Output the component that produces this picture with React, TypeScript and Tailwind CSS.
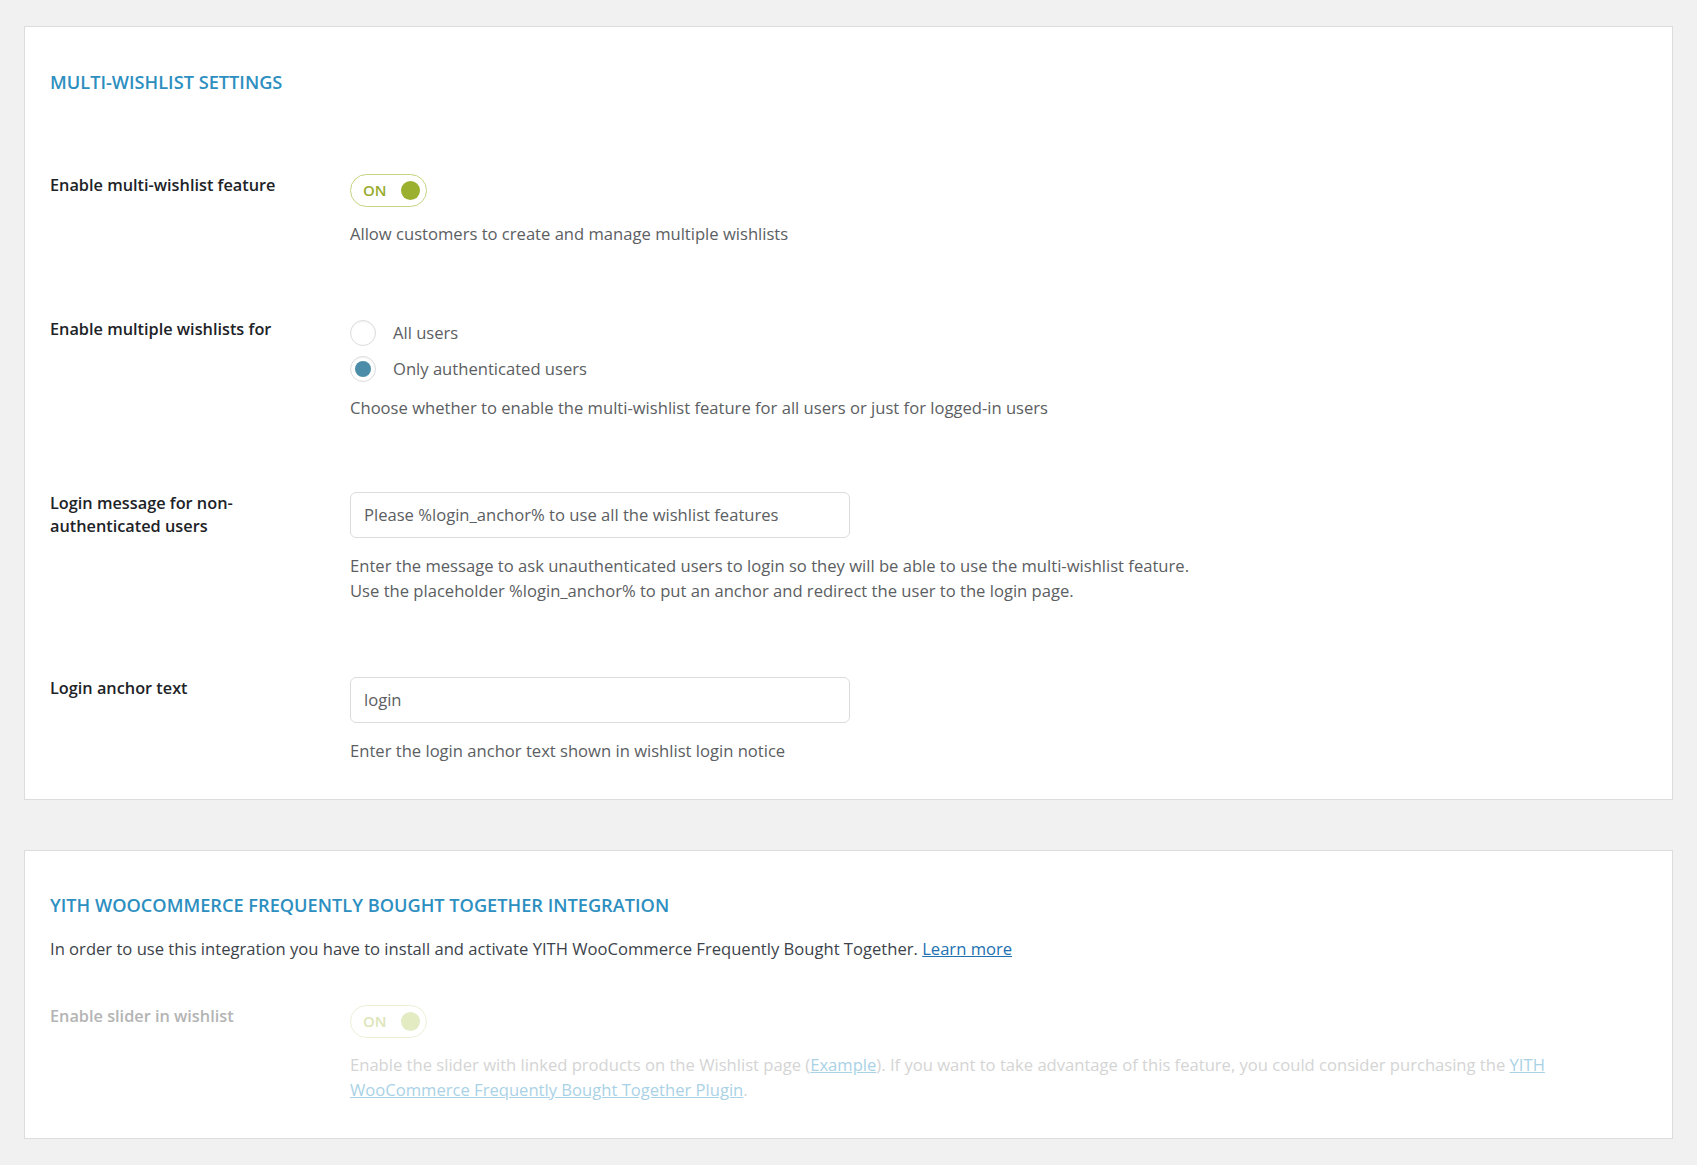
import React from 'react';

const font = { fontFamily: '"Open Sans", "Noto Sans", Arial, sans-serif' };

const Toggle: React.FC<{ disabled?: boolean }> = ({ disabled }) => (
  <div
    className={`flex h-[33px] w-[77px] items-center justify-between rounded-full border-[1.5px] bg-white pl-[12px] pr-[6px] ${
      disabled ? 'border-[#ecf1d6]' : 'border-[#c5d47f]'
    }`}
  >
    <span className={`text-[15px] font-semibold ${disabled ? 'text-[#dde5b8]' : 'text-[#98ab2c]'}`}>ON</span>
    <span className={`h-[19px] w-[19px] rounded-full ${disabled ? 'bg-[#e3ebc3]' : 'bg-[#9bb02e]'}`}></span>
  </div>
);

const Radio: React.FC<{ checked?: boolean; label: string }> = ({ checked, label }) => (
  <label className="flex items-center gap-[17px]">
    <span className="flex h-[26px] w-[26px] items-center justify-center rounded-full border border-[#dcdcdc] bg-white shadow-[inset_0_1px_2px_rgba(0,0,0,0.05)]">
      {checked && <span className="h-[16px] w-[16px] rounded-full bg-[#4b8da8]"></span>}
    </span>
    <span className="text-[16.6px] text-[#5b5e62]">{label}</span>
  </label>
);

const Row: React.FC<{ label: React.ReactNode; children: React.ReactNode; muted?: boolean }> = ({ label, children, muted }) => (
  <div className="grid grid-cols-[300px_1fr]">
    <div className={`pr-4 text-[16.3px] font-semibold leading-[23px] ${muted ? 'text-[#b4b4b4]' : 'text-[#1d2327]'}`}>{label}</div>
    <div className="flex flex-col">{children}</div>
  </div>
);

const Desc: React.FC<{ children: React.ReactNode; className?: string }> = ({ children, className }) => (
  <p className={`text-[16.6px] leading-[25px] text-[#5b5e62] ${className ?? ''}`}>{children}</p>
);

const TextInput: React.FC<{ value: string }> = ({ value }) => (
  <div className="flex h-[46px] w-[500px] items-center rounded-[6px] border border-[#dcdcdc] bg-white px-[13px] text-[16.6px] text-[#5b5e62]">
    {value}
  </div>
);

export default function App() {
  return (
    <div className="min-h-[1165px] bg-[#f1f1f1] px-[24px] pt-[26px] pb-[28px]" style={font}>
      {/* Multi-wishlist */}
      <section className="border border-[#dcdcdc] bg-white px-[25px] pt-[42px] pb-[36px]">
        <h2 className="text-[18.2px] font-semibold uppercase leading-[26px] text-[#2d8fbf]">Multi-wishlist settings</h2>

        <div className="mt-[79px] flex flex-col gap-[72px]">
          <Row label="Enable multi-wishlist feature">
            <Toggle />
            <Desc className="mt-[14px]">Allow customers to create and manage multiple wishlists</Desc>
          </Row>

          <Row label="Enable multiple wishlists for">
            <div className="mt-[2px] flex flex-col gap-[10px]">
              <Radio label="All users" />
              <Radio checked label="Only authenticated users" />
            </div>
            <Desc className="mt-[13px]">
              Choose whether to enable the multi-wishlist feature for all users or just for logged-in users
            </Desc>
          </Row>

          <Row label={<>Login message for non-<br />authenticated users</>}>
            <TextInput value="Please %login_anchor% to use all the wishlist features" />
            <Desc className="mt-[15px]">
              Enter the message to ask unauthenticated users to login so they will be able to use the multi-wishlist feature.
              <br />
              Use the placeholder %login_anchor% to put an anchor and redirect the user to the login page.
            </Desc>
          </Row>

          <div className="mt-[2px]">
            <Row label="Login anchor text">
              <TextInput value="login" />
              <Desc className="mt-[15px]">Enter the login anchor text shown in wishlist login notice</Desc>
            </Row>
          </div>
        </div>
      </section>

      {/* Frequently bought together */}
      <section className="mt-[50px] border border-[#dcdcdc] bg-white px-[25px] pt-[41px] pb-[36px]">
        <h2 className="text-[18.2px] font-semibold uppercase leading-[26px] text-[#2d8fbf]">
          YITH WooCommerce Frequently Bought Together Integration
        </h2>
        <p className="mt-[18px] text-[16.6px] leading-[25px] text-[#3c434a]">
          In order to use this integration you have to install and activate YITH WooCommerce Frequently Bought Together.{' '}
          <a href="#" className="text-[#2271b1] underline">Learn more</a>
        </p>

        <div className="mt-[44px]">
          <Row label="Enable slider in wishlist" muted>
            <Toggle disabled />
            <p className="mt-[14px] max-w-[1230px] text-[16.6px] leading-[25px] text-[#d4d4d4]">
              Enable the slider with linked products on the Wishlist page (<a href="#" className="text-[#a9d2e6] underline">Example</a>). If
              you want to take advantage of this feature, you could consider purchasing the{' '}
              <a href="#" className="text-[#a9d2e6] underline">YITH WooCommerce Frequently Bought Together Plugin</a>.
            </p>
          </Row>
        </div>
      </section>
    </div>
  );
}
